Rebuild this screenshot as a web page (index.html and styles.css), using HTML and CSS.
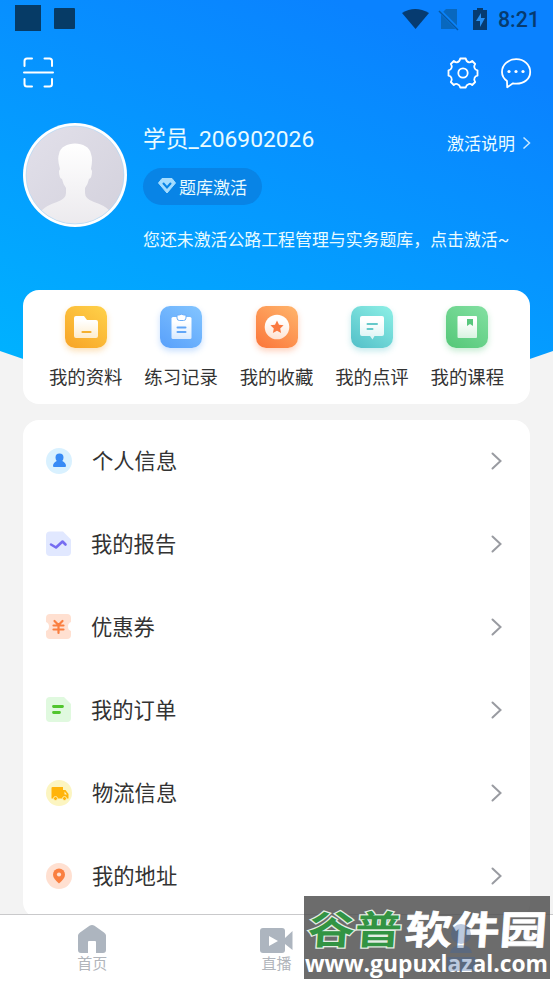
FILE: index.html
```html
<!DOCTYPE html>
<html lang="zh-CN">
<head>
<meta charset="utf-8">
<title>我的</title>
<link rel="stylesheet" href="styles.css">
</head>
<body>
<div class="app">
  <div class="backdrop"></div>
  <header class="status">
    <span class="square large"></span><span class="square small"></span>
    <svg class="status-icons" width="92" height="24" viewBox="0 0 92 24">
      <path d="M0 5Q13-3 27 5L13.500 21Z" fill="#063b70"/>
      <path d="M44 1h11v20H39V6z" fill="#0868bf"/>
      <path d="M37 2l19 19" stroke="#0a83fa" stroke-width="3.500"/>
      <path d="M37 3l19 19" stroke="#0759a6" stroke-width="1.500"/>
      <path d="M71 2h4V0h6v2h4v20H71z" fill="#063b70"/>
      <path d="M79 5l-5 8h4v6l5-9h-4z" fill="#258ff4"/>
    </svg>
    <span class="clock">8:21</span>
  </header>
  <div class="toolbar">
    <svg width="32" height="32" viewBox="0 0 32 32" fill="none" stroke="#fff" stroke-width="2" stroke-linecap="round">
      <path d="M1.500 9V4q0-2.500 2.500-2.500h5M21.500 1.500h5q2.500 0 2.500 2.500v5M1.500 22v5q0 2.500 2.500 2.500h5M21.500 29.500h5q2.500 0 2.500-2.500v-5M1 15.500h29"/>
    </svg>
    <div class="tools">
      <svg width="32" height="32" viewBox="0 0 32 32" fill="none" stroke="#fff" stroke-width="1.800" stroke-linejoin="round">
        <path d="M13.300 1.500h5.400q.5 3 3.300 3.800 1.300.3 3.200-1.300l3 3q-1.500 2-.8 3.700.8 2.300 3.100 2.600v5.400q-2.400.3-3.100 2.600-.7 1.700.8 3.700l-3 3q-1.900-1.600-3.500-.9-2.500.7-3 3.400h-5.400q-.5-2.700-3-3.400-1.600-.7-3.500.9l-3-3q1.500-2 .8-3.700-.7-2.300-3.100-2.600v-5.400q2.300-.3 3.100-2.600.7-1.700-.8-3.700l3-3Q8.700 5.600 10 5.300q2.800-.8 3.300-3.800z"/>
        <circle cx="16" cy="16" r="4.700"/>
      </svg>
      <svg width="32" height="32" viewBox="0 0 32 32" fill="none" stroke="#fff" stroke-width="1.800" stroke-linejoin="round">
        <path d="M7 24C3.500 21.500 2 18.500 2 15 2 7.800 8.200 2.200 16.200 2.200S30.200 7.800 30.200 15 24 26.700 16.200 26.700q-1.700 0-3.200-.4L7.200 30.300z"/>
        <g fill="#fff" stroke="none"><circle cx="9" cy="14.500" r="1.600"/><circle cx="16" cy="14.500" r="1.600"/><circle cx="23" cy="14.500" r="1.600"/></g>
      </svg>
    </div>
  </div>
  <section class="profile">
    <svg class="avatar" width="104" height="104" viewBox="0 0 104 104">
      <defs>
        <linearGradient id="av" x1="0" y1="0" x2="1" y2="1"><stop stop-color="#e2e0ea"/><stop offset="1" stop-color="#d3d1dc"/></linearGradient>
        <linearGradient id="body" x1="0" y1="0" x2="0" y2="1"><stop stop-color="#fff"/><stop offset="1" stop-color="#ebe9ed"/></linearGradient>
        <clipPath id="round"><circle cx="52" cy="52" r="49"/></clipPath>
      </defs>
      <circle cx="52" cy="52" r="52" fill="#fff"/>
      <circle cx="52" cy="52" r="49" fill="url(#av)"/>
      <path clip-path="url(#round)" fill="url(#body)" d="M18 104V88Q24 82 34 79Q43 76 43 70V65Q40 61 39 56Q36 55 36 48L37 46Q34 36 36 31C38 17 66 17 68 31Q70 36 68 46L69 48Q69 55 66 56Q65 61 62 65V70Q62 76 71 79Q81 82 87 88V104Z"/>
      <circle cx="52" cy="52" r="49" fill="none" stroke="#9bd3fb" stroke-width=".5"/>
    </svg>
    <div class="details">
      <div class="name-row">
        <span class="name">学员_206902026</span>
        <span class="explain">激活说明<svg width="9" height="14" viewBox="0 0 9 14" fill="none" stroke="#c8e8ff" stroke-width="1.500"><path d="M1.500 1.500L7.500 7l-6 5.500"/></svg></span>
      </div>
      <span class="badge"><svg width="18" height="16" viewBox="0 0 18 16"><path d="M4 .5h10L17.500 5 9 15 .5 5z" fill="#a5ddff" stroke="#a5ddff" stroke-linejoin="round"/><path d="M5.500 5.500L9 9.500l3.500-4" fill="none" stroke="#0884e6" stroke-width="2" stroke-linecap="round"/></svg>题库激活</span>
      <p class="notice">您还未激活公路工程管理与实务题库，点击激活~</p>
    </div>
  </section>
  <nav class="shortcuts">
    <a class="shortcut"><span class="tile gold"><svg width="42" height="42" viewBox="0 0 42 42"><path d="M11 10h8l3 4h9q2 0 2 2v14q0 2-2 2H11q-2 0-2-2V12q0-2 2-2z" fill="url(#fade)"/><path d="M17.500 26h8" stroke="#f5b02f" stroke-width="2.200" stroke-linecap="round"/></svg></span>我的资料</a>
    <a class="shortcut"><span class="tile blue"><svg width="42" height="42" viewBox="0 0 42 42"><rect x="11.500" y="11" width="20" height="22" rx="1.500" fill="url(#fade)"/><path d="M17 9h2q2.500-1.500 5 0h2v3q0 2.500-2.500 2.500h-4Q17 14.500 17 12z" fill="#fff" stroke="#69adfa"/><path d="M17.500 21.500h8M17.500 26h8" stroke="#60a6f8" stroke-width="2" stroke-linecap="round"/></svg></span>练习记录</a>
    <a class="shortcut"><span class="tile orange"><svg width="42" height="42" viewBox="0 0 42 42"><circle cx="21" cy="21" r="12.300" fill="url(#fade)"/><path d="M21 14.500l2 4.200 4.600.6-3.400 3.200.9 4.600-4.100-2.300-4.100 2.300.9-4.600-3.400-3.200 4.600-.6z" fill="#fa7940"/></svg></span>我的收藏</a>
    <a class="shortcut"><span class="tile cyan"><svg width="42" height="42" viewBox="0 0 42 42"><path d="M11 10h20q2 0 2 2v16q0 2-2 2h-7.500L21.500 33.500 19 30h-8q-2 0-2-2V12q0-2 2-2z" fill="url(#fade)"/><path d="M16.500 18H26M16.500 23h5" stroke="#65c9ca" stroke-width="2" stroke-linecap="round"/></svg></span>我的点评</a>
    <a class="shortcut"><span class="tile green"><svg width="42" height="42" viewBox="0 0 42 42"><rect x="11.500" y="10" width="19.500" height="22" rx="1" fill="url(#fade)"/><path d="M21 13h6v7l-3-2-3 2z" fill="#58c77d"/></svg></span>我的课程</a>
  </nav>
  <main class="menu">
    <a class="row"><svg class="icon" width="26" height="26" viewBox="0 0 26 26"><circle cx="13" cy="13" r="13" fill="#d9f1ff"/><path d="M9.500 9.500a4 4 0 1 1 8 0q0 2-1.200 3.500 3.700 1.800 3.700 5 0 1-1 1H8q-1 0-1-1 0-3.200 3.700-5Q9.500 11.500 9.500 9.500z" fill="#388bf5"/></svg><span class="shifted">个人信息</span><svg class="chevron" width="12" height="18" viewBox="0 0 12 18"><path d="M1.500 1.500L9.500 9l-8 7.500"/></svg></a>
    <a class="row"><svg class="icon" width="26" height="26" viewBox="0 0 26 26"><path d="M4 .5h13l8 8V21q0 4-4 4H4q-4 0-4-4V4.500q0-4 4-4z" fill="#e1e8ff"/><path d="M5 13.500l5 3 6.500-6 3 3" fill="none" stroke="#766df1" stroke-width="2.600" stroke-linecap="round" stroke-linejoin="round"/></svg><span>我的报告</span><svg class="chevron" width="12" height="18" viewBox="0 0 12 18"><path d="M1.500 1.500L9.500 9l-8 7.500"/></svg></a>
    <a class="row"><svg class="icon" width="26" height="26" viewBox="0 0 26 26"><path d="M4 0h17q4 0 4 4v4q-3 1-3 4.500t3 4.500v4q0 4-4 4H4q-4 0-4-4v-4q3-1 3-4.500T0 8V4q0-4 4-4z" fill="#ffe0d1"/><path d="M8.500 7l4 4 4-4M7.500 11.500h10M7.500 15.500h10M12.500 11.500V19" fill="none" stroke="#fa7f40" stroke-width="2.200" stroke-linecap="round"/></svg><span>优惠券</span><svg class="chevron" width="12" height="18" viewBox="0 0 12 18"><path d="M1.500 1.500L9.500 9l-8 7.500"/></svg></a>
    <a class="row"><svg class="icon" width="26" height="26" viewBox="0 0 26 26"><path d="M4 0h14l7 7v14q0 4-4 4H4q-4 0-4-4V4q0-4 4-4z" fill="#e0f9df"/><path d="M7.500 9.500h9M7.500 15.500h6" stroke="#51c52e" stroke-width="2.800" stroke-linecap="round"/></svg><span>我的订单</span><svg class="chevron" width="12" height="18" viewBox="0 0 12 18"><path d="M1.500 1.500L9.500 9l-8 7.500"/></svg></a>
    <a class="row"><svg class="icon" width="26" height="26" viewBox="0 0 26 26"><circle cx="13" cy="13" r="13" fill="#fcf5c1"/><path d="M6.500 7H17v3h2.500l3 4v4.500H5.500V8q0-1 1-1z" fill="#ffb40b"/><path d="M18.500 11.500l2.500 3h-2.500z" fill="#fff3bd"/><g fill="#ffb40b" stroke="#fcf5c1" stroke-width=".8"><circle cx="9.500" cy="18.500" r="2"/><circle cx="18.500" cy="18.500" r="2"/></g></svg><span class="shifted">物流信息</span><svg class="chevron" width="12" height="18" viewBox="0 0 12 18"><path d="M1.500 1.500L9.500 9l-8 7.500"/></svg></a>
    <a class="row"><svg class="icon" width="26" height="26" viewBox="0 0 26 26"><circle cx="13" cy="13" r="13" fill="#ffe0d1"/><path d="M13 20.500Q7 15.500 7 11.500a6 6 0 0 1 12 0q0 4-6 9z" fill="#fa7f40"/><circle cx="13" cy="11.500" r="2.100" fill="#ffe0d1"/></svg><span class="shifted">我的地址</span><svg class="chevron" width="12" height="18" viewBox="0 0 12 18"><path d="M1.500 1.500L9.500 9l-8 7.500"/></svg></a>
  </main>
  <footer class="tabs">
    <a class="tab"><svg width="30" height="28" viewBox="0 0 30 28"><path d="M12.500.7q2.500-1.400 5 0L27 7.500q2 1.500 2 3V25q0 3-3 3h-7V17q0-1-1-1h-6q-1 0-1 1v11H4q-3 0-3-3V10.500q0-1.500 2-3z" fill="#adb5bf"/></svg>首页</a>
    <a class="tab live"><svg width="33" height="28" viewBox="0 0 33 28"><rect y="3" width="25" height="25" rx="3" fill="#adb5bf"/><path d="M25 13l7.500-7v19L25 19z" fill="#adb5bf"/><path d="M9 11v10l9-5z" fill="#fff"/></svg>直播</a>
    <a class="tab"></a>
  </footer>
  <svg class="watermark" width="246" height="83" viewBox="0 0 246 83">
    <rect width="246" height="83" fill="#505050" fill-opacity=".84"/>
    <g class="brand" transform="translate(3 47.500) skewX(-4) scale(1 .81)"><text class="brand-green" x="0" y="0" textLength="94" lengthAdjust="spacingAndGlyphs">谷普</text><text x="97" y="0" textLength="142" lengthAdjust="spacingAndGlyphs">软件园</text></g>
    <text class="site" x="1" y="75.500" textLength="243" lengthAdjust="spacingAndGlyphs">www.gupuxlazal.com</text>
    <g fill="#3c64a0" fill-opacity=".35"><circle cx="157" cy="38" r="10"/><path d="M146 57q2-8 11-8t11 8z"/><rect x="143" y="61" width="28" height="14"/></g>
  </svg>
  <svg class="defs" width="0" height="0"><defs><linearGradient id="fade" x1="0" y1="0" x2="0" y2="1"><stop offset=".2" stop-color="#fff"/><stop offset="1" stop-color="#fff" stop-opacity=".75"/></linearGradient></defs></svg>
</div>
</body>
</html>
```
FILE: styles.css
```css
* { box-sizing: border-box; }
body { margin: 0; font-family: Roboto, "Noto Sans CJK SC", sans-serif; color: #333; }
svg { display: block; flex: none; }
.app { position: relative; isolation: isolate; width: 553px; height: 983px; overflow: hidden; background: #f3f3f3; display: flex; flex-direction: column; }
.backdrop { position: absolute; z-index: -1; inset: 0 0 auto; height: 400px; background: linear-gradient(22deg, #00b1ff 8%, #0a82ff 86%); clip-path: polygon(0 0, 100% 0, 100% 351px, 95.8% 359px, 75% 390px, 25% 390px, 4.200% 359px, 0 351px); }
.status { flex: none; height: 38px; padding: 0 14px 2px 15px; display: flex; align-items: center; }
.square { background: #063b66; }
.large { width: 26px; height: 26px; }
.small { width: 21px; height: 21px; margin-left: 13px; border-radius: 1px; }
.status-icons { margin: 3px 4px 0 auto; }
.clock { padding-top: 3px; font-size: 21.300px; font-weight: 500; color: #063b70; line-height: 35px; width: 41px; white-space: nowrap; }
.toolbar { flex: none; height: 72px; padding: 19px 21.500px 0 22.500px; display: flex; justify-content: space-between; }
.tools { display: flex; gap: 21px; }
.profile { flex: none; height: 180px; padding: 13px 22px 0 23px; display: flex; gap: 16px; color: #e9fbff; }
.details { flex: 1; min-width: 0; }
.name-row { height: 33px; display: flex; justify-content: space-between; align-items: center; }
.name { font-size: 22.800px; line-height: 33px; }
.explain { display: flex; align-items: center; gap: 7px; font-size: 17px; padding-top: 6px; }
.badge { display: flex; align-items: center; gap: 3px; width: 119px; height: 37px; margin-top: 12px; padding: 0 0 1px 15px; border-radius: 19px; background: #0884e6; font-size: 17px; }
.notice { margin: 23px 0 0; font-size: 16.900px; line-height: 25px; white-space: nowrap; }
.shortcuts { flex: none; height: 114px; margin: 0 23px; padding: 16px 15px 0; background: #fff; border-radius: 16px; display: flex; }
.shortcut { flex: 1; display: flex; flex-direction: column; align-items: center; font-size: 18.400px; line-height: 28px; white-space: nowrap; }
.tile { width: 42px; height: 42px; border-radius: 10px; margin-bottom: 16px; }
.gold { background: linear-gradient(35deg, #f7a326, #ffd24a); box-shadow: 0 3px 6px #f7a32655; }
.blue { background: linear-gradient(35deg, #58a0fb, #83c5ff); box-shadow: 0 3px 6px #58a0fb55; }
.orange { background: linear-gradient(35deg, #fb7539, #ffb56c); box-shadow: 0 3px 6px #fb753955; }
.cyan { background: linear-gradient(35deg, #52bfc8, #8ef0e6); box-shadow: 0 3px 6px #52bfc855; }
.green { background: linear-gradient(35deg, #54c777, #83e0a2); box-shadow: 0 3px 6px #54c77755; }
.menu { flex: none; height: 498px; margin: 16px 23px 0; background: #fff; border-radius: 16px; }
.row { height: 83px; padding: 0 27px 1px 23px; display: flex; align-items: center; font-size: 21.300px; line-height: 30px; }
.row span { padding-top: 2px; }
.icon { margin-right: 19px; }
.shifted { margin-left: 1px; }
.chevron { margin-left: auto; fill: none; stroke: #999ba1; stroke-width: 2; stroke-linecap: round; }
.tabs { position: absolute; inset: auto 0 0; height: 69px; background: #fff; border-top: 1px solid #c9c9cb; display: flex; }
.tab { flex: 1; padding-top: 10px; display: flex; flex-direction: column; align-items: center; font-size: 15px; line-height: 22px; color: #b1b5bb; }
.watermark { position: absolute; left: 304px; top: 896px; }
.brand text { font: 700 48px "Noto Sans CJK SC", sans-serif; fill: #fff; stroke: #fff; stroke-width: .8px; }
.brand .brand-green { fill: #329443; stroke: #e3eee3; stroke-width: 3px; paint-order: stroke; }
.site { font: 700 24px "Open Sans", sans-serif; fill: #fff; }
.defs { position: absolute; }
```
